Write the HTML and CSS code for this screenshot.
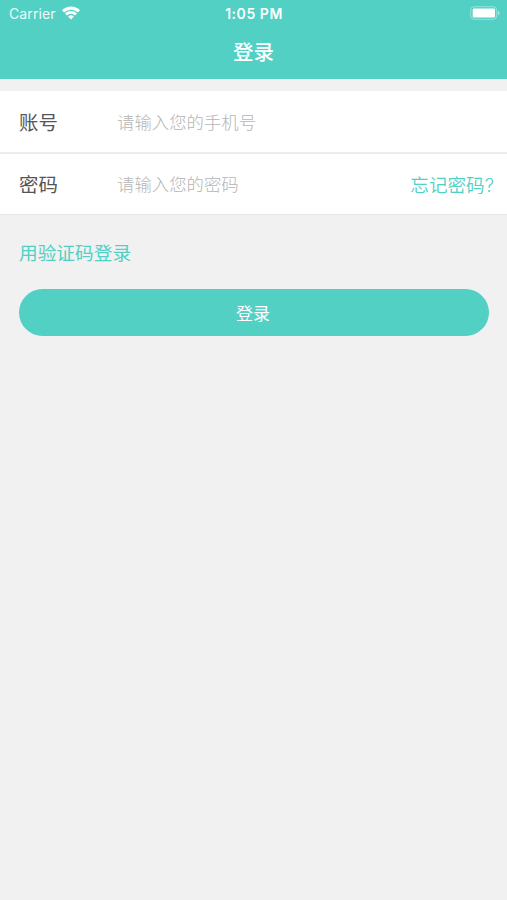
FILE: index.html
```html
<!DOCTYPE html>
<html lang="zh-CN">
<head>
<meta charset="utf-8">
<title>登录</title>
<link rel="stylesheet" href="styles.css">
</head>
<body>
<header class="header">
  <div class="status">
    <div class="carrier"><span>Carrier</span>
      <svg class="wifi" width="18" height="14" viewBox="0 0 18 14"><path d="M9 13.500 6.100 10.600a4.100 4.100 0 0 1 5.800 0zM4.900 9.400 3 7.500a8.500 8.500 0 0 1 12 0l-1.900 1.900a5.900 5.900 0 0 0-8.200 0zM2.100 6.500 0 4.300a12.800 12.800 0 0 1 18 0l-2.100 2.200a9.900 9.900 0 0 0-13.800 0z"/></svg>
    </div>
    <span class="time">1:05 PM</span>
    <svg class="battery" width="30" height="14" viewBox="0 0 30 14"><rect class="shell" x=".7" y=".7" width="26" height="12.600" rx="3.500"/><rect x="2.700" y="2.500" width="22.300" height="9" rx="1.300"/><path class="cap" d="M28 4.700c2 .6 2 4 0 4.600z"/></svg>
  </div>
  <h1 class="title">登录</h1>
</header>
<main>
  <form class="form">
    <div class="fields">
      <label class="row"><span class="label">账号</span><span class="hint">请输入您的手机号</span></label>
      <label class="row"><span class="label">密码</span><span class="hint">请输入您的密码</span><a class="forgot">忘记密码?</a></label>
    </div>
    <a class="code-login">用验证码登录</a>
    <button class="submit" type="button">登录</button>
  </form>
</main>
</body>
</html>
```
FILE: styles.css
```css
* { box-sizing: border-box; }
body {
  margin: 0;
  min-height: 900px;
  background: #f1f1f1;
  font-family: Inter, "Noto Sans CJK SC", sans-serif;
}
.header { height: 79px; background: #52d0c4; color: #fff; }
.status {
  display: grid;
  grid-template-columns: 1fr auto 1fr;
  align-items: center;
  height: 27px;
  padding: 0 7px 0 9px;
  font-size: 14px;
}
.carrier { display: flex; align-items: center; gap: 6px; letter-spacing: .1px; }
.carrier span { opacity: .9; }
.wifi, .battery { fill: #fff; }
.wifi { margin-top: -2px; }
.time { margin-left: -1px; font-weight: 600; letter-spacing: .55px; }
.battery { justify-self: end; margin-top: -1px; }
.shell { fill: none; stroke: #fff; opacity: .4; }
.cap { opacity: .5; }
.title { margin: 0; font-size: 20.500px; line-height: 52px; font-weight: 500; text-align: center; }
.form { display: flex; flex-direction: column; padding-top: 12px; }
.fields { background: #fff; }
.row {
  display: flex;
  align-items: center;
  padding: 0 13px 0 19px;
}
.row:first-child { height: 63px; border-bottom: 2px solid #ececec; }
.row:last-child { height: 61px; padding-bottom: 2px; border-bottom: 1px solid #e6e6e6; }
.label { width: 98px; font-size: 19.400px; color: #555; }
.hint { flex: 1; font-size: 17.400px; font-weight: 300; color: #b5b5b5; }
.forgot { font-size: 18.600px; font-weight: 350; color: #52d0c4; }
.code-login { margin: 25px 0 0 19px; font-size: 18.700px; line-height: 27px; color: #52d0c4; }
.submit {
  height: 47px;
  margin: 22px 18px 0 19px;
  padding: 0 2px 0 0;
  border: 0;
  border-radius: 24px;
  background: #52d0c4;
  color: #fff;
  font: 17px "Noto Sans CJK SC", sans-serif;
}
```
